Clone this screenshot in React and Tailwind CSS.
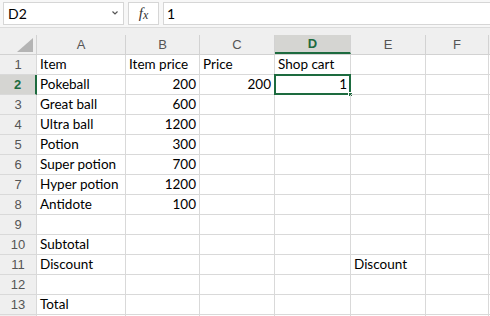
import React from 'react';

const COLS = ['A', 'B', 'C', 'D', 'E', 'F'];
const WIDTHS = ['w-[89px]', 'w-[74px]', 'w-[75px]', 'w-[76px]', 'w-[75px]', 'w-[63px]'];

// row data: [A, B, C, D, E] — numbers right aligned
const ROWS = [
  ['Item', 'Item price', 'Price', 'Shop cart', ''],
  ['Pokeball', 200, 200, 1, ''],
  ['Great ball', 600, '', '', ''],
  ['Ultra ball', 1200, '', '', ''],
  ['Potion', 300, '', '', ''],
  ['Super potion', 700, '', '', ''],
  ['Hyper potion', 1200, '', '', ''],
  ['Antidote', 100, '', '', ''],
  ['', '', '', '', ''],
  ['Subtotal', '', '', '', ''],
  ['Discount', '', '', '', 'Discount'],
  ['', '', '', '', ''],
  ['Total', '', '', '', ''],
  ['', '', '', '', ''],
];

const Cell = ({ value, width, selected }) => {
  const isNum = typeof value === 'number';
  return (
    <div
      className={`${width} shrink-0 h-[20px] border-r border-b border-[#d9d9d9] relative flex items-end pb-[1px] px-[3px] text-[13.5px] leading-[18px] text-black whitespace-nowrap ${
        isNum ? 'justify-end' : 'justify-start'
      }`}
    >
      {value}
      {selected && (
        <>
          <div className="absolute -left-[1px] -top-[1px] -right-[1px] -bottom-[1px] border-2 border-[#1d6b3f]" />
          <div className="absolute -right-[3px] -bottom-[3px] w-[5px] h-[5px] bg-[#1d6b3f] border border-white" />
        </>
      )}
    </div>
  );
};

export default function App() {
  return (
    <div className="w-[490px] h-[316px] overflow-hidden bg-white" style={{ fontFamily: 'Lato, "Liberation Sans", sans-serif' }}>
      {/* formula bar */}
      <div className="h-[28px] bg-[#f7f7f7] border-b border-[#dcdcdc] flex items-center pl-[3px] gap-[4px]">
        <div className="w-[121px] h-[23px] bg-white border border-[#d6d6d6] flex items-center justify-between pl-[4px] pr-[4px] text-[14px] text-black">
          <span>D2</span>
          <svg width="8" height="6" viewBox="0 0 8 6" className="mb-[2px]">
            <path d="M1.5 1.5 L4 4 L6.5 1.5" fill="none" stroke="#555" strokeWidth="1.2" />
          </svg>
        </div>
        <div className="w-[31px] h-[23px] bg-white border border-[#d6d6d6] flex items-center justify-center text-[#333]" style={{ fontFamily: '"Liberation Serif", serif' }}>
          <i className="text-[15px]">f</i><i className="text-[12px] mt-[3px]">x</i>
        </div>
        <div className="flex-1 h-[23px] bg-white border border-[#d6d6d6] border-r-0 flex items-center pl-[3px] text-[14px] text-black">
          1
        </div>
      </div>
      <div className="h-[7px] bg-[#efefef]" />

      {/* column headers */}
      <div className="flex h-[20px] bg-[#efefef] border-b border-[#d2d2d2]">
        <div className="w-[37px] shrink-0 border-r border-[#d2d2d2] relative">
          <svg width="16" height="14" viewBox="0 0 16 14" className="absolute right-[3px] bottom-[2px]">
            <polygon points="16,0 16,14 0,14" fill="#b4b4b4" />
          </svg>
        </div>
        {COLS.map((c, i) => (
          <div
            key={c}
            className={`${WIDTHS[i]} shrink-0 border-r border-[#d2d2d2] flex items-center justify-center text-[13px] ${
              c === 'D' ? 'bg-[#d5d5d2] text-[#1d6b3f] font-bold border-b-2 border-b-[#1d6b3f]' : 'text-[#555]'
            }`}
            style={{ fontFamily: '"Liberation Sans", sans-serif' }}
          >
            {c}
          </div>
        ))}
        <div className="flex-1" />
      </div>

      {/* rows */}
      {ROWS.map((row, r) => (
        <div key={r} className="flex">
          <div
            className={`w-[37px] shrink-0 h-[20px] border-b border-r border-[#d9d9d9] flex items-center justify-center text-[13px] ${
              r === 1 ? 'bg-[#d5d5d2] text-[#1d6b3f] font-bold border-r-2 border-r-[#1d6b3f]' : 'bg-[#efefef] text-[#555]'
            }`}
            style={{ fontFamily: '"Liberation Sans", sans-serif' }}
          >
            {r < 13 ? r + 1 : ''}
          </div>
          {row.map((v, i) => (
            <Cell key={i} value={v} width={WIDTHS[i]} selected={r === 1 && i === 3} />
          ))}
          <Cell value="" width={WIDTHS[5]} />
          <div className="flex-1 h-[20px] border-b border-[#d9d9d9]" />
        </div>
      ))}
    </div>
  );
}
